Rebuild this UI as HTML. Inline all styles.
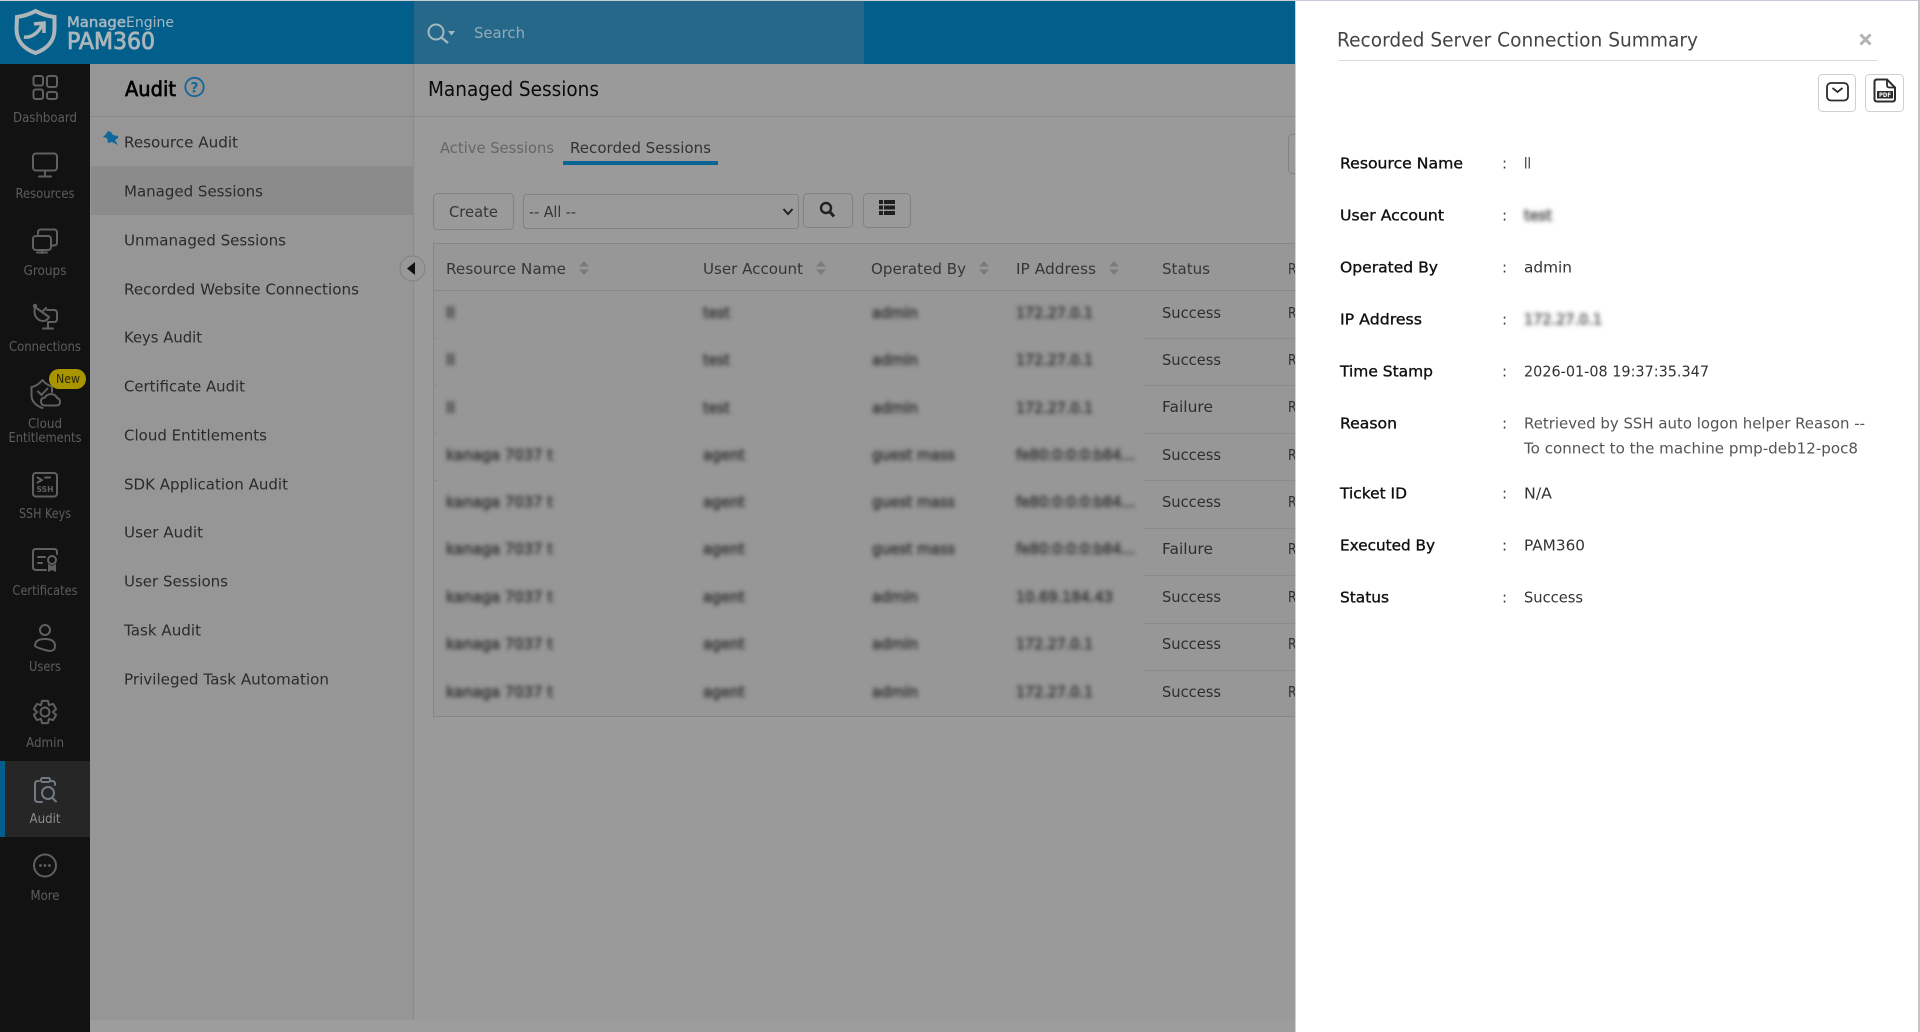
<!DOCTYPE html>
<html lang="en"><head><meta charset="utf-8"><title>Recorded Server Connection Summary</title>
<style>
html,body{margin:0;padding:0;width:1920px;height:1032px;overflow:hidden;background:#9a9a9a}
svg{display:block;position:absolute;left:0;top:0}
text{font-family:"DejaVu Sans","Liberation Sans",sans-serif;font-size:15px}
.n{font-size:13px;fill:#5d5d5d;text-anchor:middle}
.l{fill:#2b2b2b}
.h{fill:#363636}
.s{fill:#2e2e2e}
.b{fill:#3c3c3c;stroke:#3c3c3c;stroke-width:.8px}
.k{fill:#111;stroke:#111;stroke-width:.35px}
.v{fill:#333}
.i{fill:none;stroke:#606060;stroke-width:2;stroke-linecap:round;stroke-linejoin:round}
</style></head><body>
<svg width="1920" height="1032" viewBox="0 0 1920 1032" xmlns="http://www.w3.org/2000/svg">
<defs><filter id="bl" x="-5%" y="-5%" width="110%" height="110%"><feGaussianBlur stdDeviation="2.200"/></filter>
<filter id="bs" x="-40%" y="-100%" width="180%" height="300%"><feGaussianBlur stdDeviation="2.200"/></filter></defs>

<!-- backgrounds -->
<rect width="1920" height="1032" fill="#9a9a9a"/>
<rect x="90" y="64" width="323" height="956" fill="#969696"/>
<rect x="90" y="1020" width="1206" height="12" fill="#9d9d9d"/>
<rect x="413" y="64" width="1" height="956" fill="#8b8b8b"/>
<rect x="90" y="116" width="1206" height="1" fill="#8a8a8a"/>
<rect x="91" y="166" width="322" height="49" fill="#8b8b8b"/>

<!-- top bar -->
<rect width="1296" height="64" fill="#025f8c"/>
<rect width="1296" height="1" fill="#c9d0d4"/>
<rect x="414" y="1" width="450" height="63" fill="#26688a"/>
<path d="M17 17C25 16 30 14 35.5 11C41 14 46 16 54.500 17L54.500 29C54.500 41 47 49 35.500 53C24 49 16.500 41 16.500 29Z" fill="none" stroke="#aeb6ba" stroke-width="4"/>
<path d="M24 37C30 38 38 34 42 25" fill="none" stroke="#aeb6ba" stroke-width="3.500"/>
<path d="M34 24L44 23L44 33" fill="none" stroke="#aeb6ba" stroke-width="3.500"/>
<text x="67" y="27" style="font-size:14px" fill="#a9b7bf" stroke="#a9b7bf" stroke-width=".5" textLength="59" lengthAdjust="spacingAndGlyphs">Manage</text>
<text x="126" y="27" style="font-size:14px" fill="#a9b7bf" textLength="48" lengthAdjust="spacingAndGlyphs">Engine</text>
<text x="67" y="49" style="font-size:23px" fill="#abb6bc" stroke="#abb6bc" stroke-width=".8" textLength="88" lengthAdjust="spacingAndGlyphs">PAM360</text>
<circle cx="436" cy="32" r="7.500" fill="none" stroke="#a5b8c2" stroke-width="2"/>
<path d="M441.500 37.500L448 43" stroke="#a5b8c2" stroke-width="2.200"/>
<path d="M448 31h7l-3.500 4.500z" fill="#a5b8c2"/>
<text x="474" y="38" fill="#93abb8" textLength="51" lengthAdjust="spacingAndGlyphs">Search</text>

<!-- nav rail -->
<rect x="0" y="64" width="90" height="968" fill="#121212"/>
<rect x="0" y="761" width="90" height="76" fill="#262626"/>
<rect x="0" y="761" width="5" height="76" fill="#025f8c"/>

<!-- nav icons -->
<g class="i">
<rect x="33.500" y="76" width="9.500" height="9.500" rx="2"/><rect x="47" y="76" width="10" height="11" rx="2"/><rect x="33.500" y="89.500" width="9.500" height="9.500" rx="2"/><rect x="47" y="92" width="10" height="7" rx="2"/>
<rect x="33" y="153.500" width="24" height="17" rx="3"/><path d="M45 171v5M39 176.500h12"/>
<rect x="33" y="236" width="18" height="14" rx="3"/><path d="M38 234v-1.500q0-3 3-3h13q3 0 3 3v10q0 3-3 3h-3M42 250v3M37 252.500h10"/>
<path d="M35 307L49 317Q46 323 39 320Q33 316 35 307Z"/><path d="M42 312L46 308M47 310h7q3 0 3 3v6q0 3-3 3H48M48 322v6M43 328.500h10"/><circle cx="35" cy="306" r="1.200"/>
<path d="M31.500 387q6-1 11-7q4 5 9.500 6.500V392M31.500 387V395q0 9 11 13M38 391.500l3.500 3.500 6-6.500"/>
<path d="M46 405.500q-5 0-5-4t4-4q1-3 6-3.500q5 .5 6 4q3 .5 3 4t-4 3.500z"/>
<rect x="33" y="473" width="24" height="23.500" rx="3"/>
<path d="M37.500 477.500l4.500 2.500-4.500 2.500M45 477.500h5"/>
<path d="M57 554v-2q0-3-3-3H36q-3 0-3 3v15q0 3 3 3h10M38 557h7M38 563h4"/><circle cx="52" cy="560" r="4"/>
<circle cx="45" cy="630" r="5"/><path d="M35 646q0-7 10-7t10 7-10 4-10-4z"/>
<circle cx="45" cy="712" r="4.500"/>
<path d="M42 700.900H48L49 705.100L53.100 703.900L56.100 709L53 712L56.100 715L53.100 720.100L49 718.900L48 723.100H42L41 718.900L36.900 720.100L33.900 715L37 712L33.900 709L36.900 703.900L41 705.100Z"/>
<circle cx="45" cy="865.500" r="11"/>
</g>
<g fill="#606060"><circle cx="40.500" cy="865.500" r="1.400"/><circle cx="45" cy="865.500" r="1.400"/><circle cx="49.500" cy="865.500" r="1.400"/>
<path d="M48 564l4 2 4-2v8l-4-2-4 2z"/></g>
<text x="36.500" y="492" style="font-size:8px;font-weight:700" fill="#606060" textLength="17" lengthAdjust="spacingAndGlyphs">SSH</text>
<g fill="none" stroke="#717a82" stroke-width="2" stroke-linecap="round">
<path d="M55 785v-1q0-3-3-3h-1M39 781h-1q-3 0-3 3v15q0 3 3 3h4"/><rect x="41" y="778" width="9" height="4" rx="1.500"/><circle cx="48" cy="793" r="6"/><path d="M52.500 798l3.500 3.500"/></g>
<rect x="49" y="369" width="37" height="20" rx="10" fill="#a89500"/>
<text x="68" y="383" text-anchor="middle" style="font-size:12px" fill="#2b2700" textLength="24" lengthAdjust="spacingAndGlyphs">New</text>

<!-- nav labels -->
<text class="n" x="45" y="122" textLength="64" lengthAdjust="spacingAndGlyphs">Dashboard</text>
<text class="n" x="45" y="198" textLength="59" lengthAdjust="spacingAndGlyphs">Resources</text>
<text class="n" x="45" y="275" textLength="43" lengthAdjust="spacingAndGlyphs">Groups</text>
<text class="n" x="45" y="351" textLength="72" lengthAdjust="spacingAndGlyphs">Connections</text>
<text class="n" x="45" y="428" textLength="34" lengthAdjust="spacingAndGlyphs">Cloud</text>
<text class="n" x="45" y="442" textLength="73" lengthAdjust="spacingAndGlyphs">Entitlements</text>
<text class="n" x="45" y="518" textLength="52" lengthAdjust="spacingAndGlyphs">SSH Keys</text>
<text class="n" x="45" y="595" textLength="65" lengthAdjust="spacingAndGlyphs">Certificates</text>
<text class="n" x="45" y="671" textLength="32" lengthAdjust="spacingAndGlyphs">Users</text>
<text class="n" x="45" y="747" textLength="38" lengthAdjust="spacingAndGlyphs">Admin</text>
<text class="n" x="45" y="823" textLength="31" lengthAdjust="spacingAndGlyphs" style="fill:#8b8b8b">Audit</text>
<text class="n" x="45" y="900" textLength="29" lengthAdjust="spacingAndGlyphs">More</text>

<!-- audit panel -->
<text x="125" y="96" style="font-size:20px" fill="#000" stroke="#000" stroke-width=".7" textLength="51" lengthAdjust="spacingAndGlyphs">Audit</text>
<circle cx="194.500" cy="87" r="9.200" fill="none" stroke="#14689a" stroke-width="1.800"/>
<text x="194.500" y="92.500" text-anchor="middle" style="font-size:14px;font-weight:700" fill="#14689a" textLength="8" lengthAdjust="spacingAndGlyphs">?</text>
<path d="M108 131l3 1 2 3 5 1 0 2-3 2 3 5-6-3-4 1-1-5-4-1 3-3z" fill="#10689a"/>
<text class="l" x="124" y="147.500" textLength="114" lengthAdjust="spacingAndGlyphs">Resource Audit</text>
<text class="l" x="124" y="196.500" textLength="139" lengthAdjust="spacingAndGlyphs">Managed Sessions</text>
<text class="l" x="124" y="245.500" textLength="162" lengthAdjust="spacingAndGlyphs">Unmanaged Sessions</text>
<text class="l" x="124" y="294.500" textLength="235" lengthAdjust="spacingAndGlyphs">Recorded Website Connections</text>
<text class="l" x="124" y="342.500" textLength="78" lengthAdjust="spacingAndGlyphs">Keys Audit</text>
<text class="l" x="124" y="391.500" textLength="121" lengthAdjust="spacingAndGlyphs">Certificate Audit</text>
<text class="l" x="124" y="440.500" textLength="143" lengthAdjust="spacingAndGlyphs">Cloud Entitlements</text>
<text class="l" x="124" y="489.500" textLength="164" lengthAdjust="spacingAndGlyphs">SDK Application Audit</text>
<text class="l" x="124" y="537.500" textLength="79" lengthAdjust="spacingAndGlyphs">User Audit</text>
<text class="l" x="124" y="586.500" textLength="104" lengthAdjust="spacingAndGlyphs">User Sessions</text>
<text class="l" x="124" y="635.500" textLength="77" lengthAdjust="spacingAndGlyphs">Task Audit</text>
<text class="l" x="124" y="684.500" textLength="205" lengthAdjust="spacingAndGlyphs">Privileged Task Automation</text>
<circle cx="412.500" cy="268.500" r="12.500" fill="#989898" stroke="#828282"/>
<path d="M415 262v13l-8-6.500z" fill="#111"/>

<!-- main header -->
<text x="428" y="96" style="font-size:20px" fill="#0a0a0a" textLength="171" lengthAdjust="spacingAndGlyphs">Managed Sessions</text>
<text x="440" y="153" fill="#666" textLength="114" lengthAdjust="spacingAndGlyphs">Active Sessions</text>
<text x="570" y="153" fill="#333" textLength="141" lengthAdjust="spacingAndGlyphs">Recorded Sessions</text>
<rect x="563" y="161" width="155" height="4" fill="#0a6494"/>

<!-- toolbar -->
<g fill="none" stroke="#828282">
<rect x="433.500" y="193.500" width="80" height="36" rx="4"/>
<rect x="523.500" y="194.500" width="275" height="34" rx="3"/>
<rect x="803.500" y="193.500" width="49" height="34" rx="4"/>
<rect x="863.500" y="193.500" width="47" height="34" rx="4"/>
<rect x="1288.500" y="134.500" width="20" height="39" rx="4"/>
</g>
<text class="h" x="449" y="217" textLength="49" lengthAdjust="spacingAndGlyphs">Create</text>
<text class="h" x="529" y="217" textLength="47" lengthAdjust="spacingAndGlyphs">-- All --</text>
<path d="M783.500 209l4.500 5 4.500-5" fill="none" stroke="#222" stroke-width="2"/>
<circle cx="826" cy="208" r="5" fill="none" stroke="#222" stroke-width="2.400"/>
<path d="M830 212l4 4.500" stroke="#222" stroke-width="3"/>
<g fill="#1e1e1e"><rect x="879" y="200" width="4" height="4"/><rect x="884" y="200" width="11" height="4"/><rect x="879" y="205.500" width="4" height="4"/><rect x="884" y="205.500" width="11" height="4"/><rect x="879" y="211" width="4" height="4"/><rect x="884" y="211" width="11" height="4"/></g>

<!-- table -->
<rect x="433" y="243" width="863" height="474" fill="#979797"/>
<rect x="433.500" y="243.500" width="880" height="473" fill="none" stroke="#858585"/>
<rect x="433" y="290" width="863" height="1" fill="#868686"/>
<g fill="#8b8b8b">
<rect x="1143" y="338" width="153" height="1"/><rect x="1143" y="385" width="153" height="1"/><rect x="1143" y="433" width="153" height="1"/><rect x="1143" y="480" width="153" height="1"/><rect x="1143" y="528" width="153" height="1"/><rect x="1143" y="575" width="153" height="1"/><rect x="1143" y="623" width="153" height="1"/><rect x="1143" y="670" width="153" height="1"/>
<rect x="434" y="338" width="4" height="1"/><rect x="434" y="385" width="4" height="1"/><rect x="434" y="433" width="4" height="1"/><rect x="434" y="480" width="4" height="1"/>
</g>
<text class="h" x="446" y="274" textLength="120" lengthAdjust="spacingAndGlyphs">Resource Name</text>
<text class="h" x="703" y="274" textLength="100" lengthAdjust="spacingAndGlyphs">User Account</text>
<text class="h" x="871" y="274" textLength="95" lengthAdjust="spacingAndGlyphs">Operated By</text>
<text class="h" x="1016" y="274" textLength="80" lengthAdjust="spacingAndGlyphs">IP Address</text>
<text class="h" x="1162" y="274" textLength="48" lengthAdjust="spacingAndGlyphs">Status</text>
<text class="h" x="1288" y="274" textLength="8.500" lengthAdjust="spacingAndGlyphs">R</text>
<g fill="#7b7b7b">
<path d="M584 261l5 5.500h-10zM584 275l5-5.500h-10z"/><path d="M821 261l5 5.500h-10zM821 275l5-5.500h-10z"/><path d="M984 261l5 5.500h-10zM984 275l5-5.500h-10z"/><path d="M1114 261l5 5.500h-10zM1114 275l5-5.500h-10z"/>
</g>

<!-- blurred cells -->
<g filter="url(#bl)">
<text class="b" x="446" y="318" textLength="9" lengthAdjust="spacingAndGlyphs">ll</text><text class="b" x="703" y="318" textLength="27" lengthAdjust="spacingAndGlyphs">test</text><text class="b" x="872" y="318" textLength="46" lengthAdjust="spacingAndGlyphs">admin</text><text class="b" x="1016" y="318" textLength="77" lengthAdjust="spacingAndGlyphs">172.27.0.1</text>
<text class="b" x="446" y="365" textLength="9" lengthAdjust="spacingAndGlyphs">ll</text><text class="b" x="703" y="365" textLength="27" lengthAdjust="spacingAndGlyphs">test</text><text class="b" x="872" y="365" textLength="46" lengthAdjust="spacingAndGlyphs">admin</text><text class="b" x="1016" y="365" textLength="77" lengthAdjust="spacingAndGlyphs">172.27.0.1</text>
<text class="b" x="446" y="413" textLength="9" lengthAdjust="spacingAndGlyphs">ll</text><text class="b" x="703" y="413" textLength="27" lengthAdjust="spacingAndGlyphs">test</text><text class="b" x="872" y="413" textLength="46" lengthAdjust="spacingAndGlyphs">admin</text><text class="b" x="1016" y="413" textLength="77" lengthAdjust="spacingAndGlyphs">172.27.0.1</text>
<text class="b" x="446" y="460" textLength="107" lengthAdjust="spacingAndGlyphs">kanaga 7037 t</text><text class="b" x="703" y="460" textLength="42" lengthAdjust="spacingAndGlyphs">agent</text><text class="b" x="872" y="460" textLength="83" lengthAdjust="spacingAndGlyphs">guest mass</text><text class="b" x="1016" y="460" textLength="119" lengthAdjust="spacingAndGlyphs">fe80:0:0:0:b84...</text>
<text class="b" x="446" y="507" textLength="107" lengthAdjust="spacingAndGlyphs">kanaga 7037 t</text><text class="b" x="703" y="507" textLength="42" lengthAdjust="spacingAndGlyphs">agent</text><text class="b" x="872" y="507" textLength="83" lengthAdjust="spacingAndGlyphs">guest mass</text><text class="b" x="1016" y="507" textLength="119" lengthAdjust="spacingAndGlyphs">fe80:0:0:0:b84...</text>
<text class="b" x="446" y="554" textLength="107" lengthAdjust="spacingAndGlyphs">kanaga 7037 t</text><text class="b" x="703" y="554" textLength="42" lengthAdjust="spacingAndGlyphs">agent</text><text class="b" x="872" y="554" textLength="83" lengthAdjust="spacingAndGlyphs">guest mass</text><text class="b" x="1016" y="554" textLength="119" lengthAdjust="spacingAndGlyphs">fe80:0:0:0:b84...</text>
<text class="b" x="446" y="602" textLength="107" lengthAdjust="spacingAndGlyphs">kanaga 7037 t</text><text class="b" x="703" y="602" textLength="42" lengthAdjust="spacingAndGlyphs">agent</text><text class="b" x="872" y="602" textLength="46" lengthAdjust="spacingAndGlyphs">admin</text><text class="b" x="1016" y="602" textLength="97" lengthAdjust="spacingAndGlyphs">10.69.184.43</text>
<text class="b" x="446" y="649" textLength="107" lengthAdjust="spacingAndGlyphs">kanaga 7037 t</text><text class="b" x="703" y="649" textLength="42" lengthAdjust="spacingAndGlyphs">agent</text><text class="b" x="872" y="649" textLength="46" lengthAdjust="spacingAndGlyphs">admin</text><text class="b" x="1016" y="649" textLength="77" lengthAdjust="spacingAndGlyphs">172.27.0.1</text>
<text class="b" x="446" y="697" textLength="107" lengthAdjust="spacingAndGlyphs">kanaga 7037 t</text><text class="b" x="703" y="697" textLength="42" lengthAdjust="spacingAndGlyphs">agent</text><text class="b" x="872" y="697" textLength="46" lengthAdjust="spacingAndGlyphs">admin</text><text class="b" x="1016" y="697" textLength="77" lengthAdjust="spacingAndGlyphs">172.27.0.1</text>
</g>

<!-- status cells -->
<text class="s" x="1162" y="318" textLength="59" lengthAdjust="spacingAndGlyphs">Success</text><text class="s" x="1288" y="318" textLength="8.500" lengthAdjust="spacingAndGlyphs">R</text>
<text class="s" x="1162" y="365" textLength="59" lengthAdjust="spacingAndGlyphs">Success</text><text class="s" x="1288" y="365" textLength="8.500" lengthAdjust="spacingAndGlyphs">R</text>
<text class="s" x="1162" y="412" textLength="51" lengthAdjust="spacingAndGlyphs">Failure</text><text class="s" x="1288" y="412" textLength="8.500" lengthAdjust="spacingAndGlyphs">R</text>
<text class="s" x="1162" y="460" textLength="59" lengthAdjust="spacingAndGlyphs">Success</text><text class="s" x="1288" y="460" textLength="8.500" lengthAdjust="spacingAndGlyphs">R</text>
<text class="s" x="1162" y="507" textLength="59" lengthAdjust="spacingAndGlyphs">Success</text><text class="s" x="1288" y="507" textLength="8.500" lengthAdjust="spacingAndGlyphs">R</text>
<text class="s" x="1162" y="554" textLength="51" lengthAdjust="spacingAndGlyphs">Failure</text><text class="s" x="1288" y="554" textLength="8.500" lengthAdjust="spacingAndGlyphs">R</text>
<text class="s" x="1162" y="602" textLength="59" lengthAdjust="spacingAndGlyphs">Success</text><text class="s" x="1288" y="602" textLength="8.500" lengthAdjust="spacingAndGlyphs">R</text>
<text class="s" x="1162" y="649" textLength="59" lengthAdjust="spacingAndGlyphs">Success</text><text class="s" x="1288" y="649" textLength="8.500" lengthAdjust="spacingAndGlyphs">R</text>
<text class="s" x="1162" y="697" textLength="59" lengthAdjust="spacingAndGlyphs">Success</text><text class="s" x="1288" y="697" textLength="8.500" lengthAdjust="spacingAndGlyphs">R</text>

<!-- right panel -->
<rect x="1295" y="0" width="625" height="1032" fill="#fff"/>
<rect x="1295" y="0" width="625" height="1" fill="#c9ccd8"/>
<rect x="1295" y="0" width="1" height="1032" fill="#d0d0d0"/>
<rect x="1918" y="0" width="2" height="1032" fill="#c4c4c4"/>
<text x="1337" y="46.500" style="font-size:19.500px" fill="#444" textLength="361" lengthAdjust="spacingAndGlyphs">Recorded Server Connection Summary</text>
<rect x="1338" y="60" width="540" height="1" fill="#dcdcdc"/>
<path d="M1860.500 34.500l10 10M1870.500 34.500l-10 10" stroke="#b3b3b3" stroke-width="3"/>
<rect x="1818.500" y="74.500" width="37" height="37" rx="4" fill="#fff" stroke="#cfcfcf"/>
<rect x="1865.500" y="74.500" width="38" height="37" rx="4" fill="#fff" stroke="#cfcfcf"/>
<rect x="1827" y="83" width="21" height="17.500" rx="4" fill="none" stroke="#2c2c2c" stroke-width="1.800"/>
<path d="M1832.500 88l5 4 5-4" fill="none" stroke="#2c2c2c" stroke-width="1.800"/>
<path d="M1877 101.500q-2.500 0-2.500-2.500V82q0-2.500 2.500-2.500h10l8 8V99q0 2.500-2.500 2.500z" fill="none" stroke="#2c2c2c" stroke-width="2"/>
<path d="M1887 80v5q0 2.500 2.500 2.500h5" fill="none" stroke="#2c2c2c" stroke-width="1.800"/>
<rect x="1877" y="91" width="16" height="7.500" fill="#2c2c2c"/>
<text x="1885" y="97" text-anchor="middle" style="font-size:6.500px;font-weight:700" fill="#fff" textLength="12" lengthAdjust="spacingAndGlyphs">PDF</text>

<text class="k" x="1340" y="168.500" textLength="123" lengthAdjust="spacingAndGlyphs">Resource Name</text>
<text class="k" x="1340" y="220.500" textLength="104" lengthAdjust="spacingAndGlyphs">User Account</text>
<text class="k" x="1340" y="272.500" textLength="98" lengthAdjust="spacingAndGlyphs">Operated By</text>
<text class="k" x="1340" y="324.500" textLength="82" lengthAdjust="spacingAndGlyphs">IP Address</text>
<text class="k" x="1340" y="376.500" textLength="93" lengthAdjust="spacingAndGlyphs">Time Stamp</text>
<text class="k" x="1340" y="428.500" textLength="57" lengthAdjust="spacingAndGlyphs">Reason</text>
<text class="k" x="1340" y="498.500" textLength="67" lengthAdjust="spacingAndGlyphs">Ticket ID</text>
<text class="k" x="1340" y="550.500" textLength="95" lengthAdjust="spacingAndGlyphs">Executed By</text>
<text class="k" x="1340" y="602.500" textLength="49" lengthAdjust="spacingAndGlyphs">Status</text>
<g class="v">
<text class="v" x="1502" y="168.500">:</text><text class="v" x="1502" y="220.500">:</text><text class="v" x="1502" y="272.500">:</text><text class="v" x="1502" y="324.500">:</text><text class="v" x="1502" y="376.500">:</text><text class="v" x="1502" y="428.500">:</text><text class="v" x="1502" y="498.500">:</text><text class="v" x="1502" y="550.500">:</text><text class="v" x="1502" y="602.500">:</text>
</g>
<text class="v" x="1524" y="168.500" textLength="7" lengthAdjust="spacingAndGlyphs">ll</text>
<text x="1524" y="220.500" fill="#555" stroke="#555" stroke-width=".8" filter="url(#bs)" textLength="28" lengthAdjust="spacingAndGlyphs">test</text>
<text class="v" x="1524" y="272.500" textLength="48" lengthAdjust="spacingAndGlyphs">admin</text>
<text x="1524" y="324.500" fill="#666" stroke="#666" stroke-width=".8" filter="url(#bs)" textLength="78" lengthAdjust="spacingAndGlyphs">172.27.0.1</text>
<text class="v" x="1524" y="376.500" textLength="185" lengthAdjust="spacingAndGlyphs">2026-01-08 19:37:35.347</text>
<text x="1524" y="428.500" fill="#555" textLength="341" lengthAdjust="spacingAndGlyphs">Retrieved by SSH auto logon helper Reason --</text>
<text x="1524" y="453.500" fill="#555" textLength="334" lengthAdjust="spacingAndGlyphs">To connect to the machine pmp-deb12-poc8</text>
<text class="v" x="1524" y="498.500" textLength="28" lengthAdjust="spacingAndGlyphs">N/A</text>
<text class="v" x="1524" y="550.500" textLength="61" lengthAdjust="spacingAndGlyphs">PAM360</text>
<text class="v" x="1524" y="602.500" textLength="59" lengthAdjust="spacingAndGlyphs">Success</text>
</svg>
</body></html>
